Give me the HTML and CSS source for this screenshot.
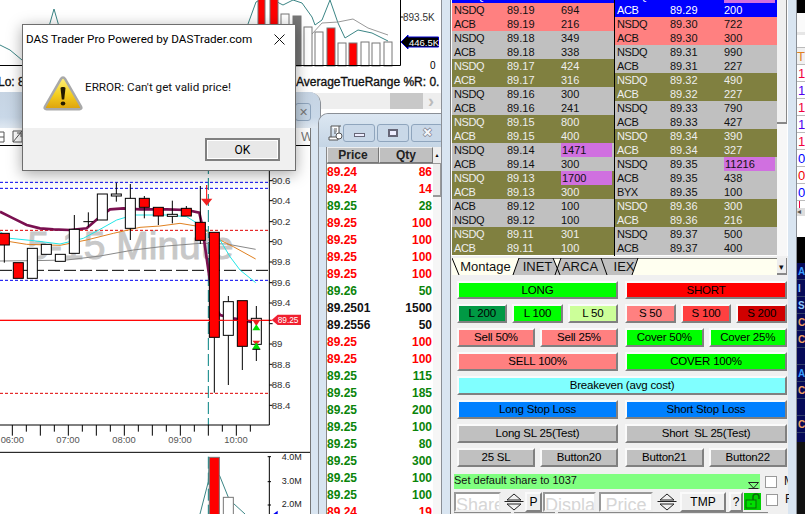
FILE: index.html
```html
<!DOCTYPE html>
<html lang="en">
<head>
<meta charset="utf-8">
<title>DAS Trader Pro</title>
<link rel="stylesheet" href="styles.css">
</head>
<body>
<div class="desktop">

  <section class="win back-win">
    <svg class="top-chart" width="441" height="72" viewBox="0 0 441 72">
      <polyline class="teal" points="0,45 10,50 22,60 48,30 54,9 60,30"/>
      <polyline class="teal" points="248,24 256,2 270,-5 279,3 283,5 293,0 302,3 312,17 315,25 322,20 330,0 338,23 345,38 358,30 372,33 388,41"/>
      <polyline class="grayline" points="312,34 322,23 338,22 353,19 368,28 388,35"/>
      <rect class="vr" x="258" y="-2" width="7" height="68"/>
      <rect class="vr" x="270" y="-2" width="8" height="68"/>
      <rect class="vw" x="281" y="14" width="8" height="52"/>
      <rect class="vg" x="293" y="16" width="8" height="50"/>
      <rect class="vw" x="304" y="27" width="8" height="39"/>
      <rect class="vw" x="315" y="32" width="8" height="34"/>
      <rect class="vr" x="327" y="28" width="8" height="38"/>
      <rect class="vw" x="338" y="43" width="8" height="23"/>
      <rect class="vr" x="349" y="43" width="8" height="23"/>
      <rect class="vw" x="361" y="42" width="8" height="24"/>
      <rect class="vw" x="372" y="43" width="8" height="23"/>
      <rect class="vw" x="384" y="42" width="8" height="24"/>
      <path class="axis" d="M0 65.5H400.5V0M400.5 17h3"/>
      <text class="vlabel" x="403" y="21">893.5K</text>
      <polygon class="vtag" points="401,42 408,35 408,37 438.500,37 438.500,47 408,47 408,49"/>
      <text class="vtagtext" x="409" y="45.500">446.5K</text>
      <text class="zero" x="430" y="69">0</text>
    </svg>
    <div class="status"><span class="lo">Lo: 8</span><span class="atr">AverageTrueRange %R: 0.</span></div>
    <div class="hscroll"><span class="hthumb"></span><span class="hchev">&#8250;</span></div>
  </section>

  <section class="win chart-win">
    <div class="chart-title"><span class="chart-close">&#10005;</span></div>
    <div class="chart-inner">
      <div class="chart-tools">
        <svg class="tool-icons" width="24" height="14" viewBox="0 0 24 14">
          <path class="tool" d="M-4 2h8v10h-8M0 7h4M13 1h9v11h-9zM13 12l9-11M17 3h4v4"/>
        </svg>
        <span class="chart-w">W</span>
      </div>
      <svg class="main-chart" width="310" height="368" viewBox="0 -72 930 1104">
        <text class="watermark" x="700" y="268">5-15 Minute</text>

        <path class="dash-blue" d="M0 37H808M0 55H808M0 331H808"/>
        <path class="dash-red" d="M0 181H808M0 670H808"/>
        <path class="dash-black" d="M0 301H808"/>
        <path class="solid-red" d="M0 451H815"/>
        <path class="dash-teal" d="M625 -72V765"/>

        <polyline class="ma-gray" points="0,273 100,272 200,270 300,258 400,240 500,228 600,220 680,222 767,238"/>
        <polyline class="ma-orange" points="30,215 80,223 180,226 260,210 340,190 420,172 480,168 540,160 600,170 650,205 700,230 767,267"/>
        <polyline class="ma-cyan" points="0,185 30,205 100,212 180,222 250,205 300,178 350,150 400,135 500,135 560,140 600,165 625,185 660,210 690,260 720,300 767,338"/>
        <polyline class="ma-maroon" points="0,125 40,145 80,165 120,175 160,178 210,180 260,175 300,140 330,118 370,115 420,118 500,118 560,120 598,128 605,160 625,300 640,400 660,435 700,445 750,455 770,460"/>

        <g class="wicks">
          <path d="M13 225V278M223 135V178M265 127V170M349 38V95M391 42V210M433 78V145M475 138V165M517 92V160M559 108V138M601 48V222M643 502V668M685 378V645M727 529V600M769 408V573M250 155H280"/>
        </g>
        <rect class="red" x="-2" y="190" width="30" height="35"/>
        <rect class="red" x="40" y="278" width="30" height="47"/>
        <rect class="white" x="82" y="235" width="30" height="90"/>
        <rect class="white" x="124" y="223" width="30" height="30"/>
        <rect class="white" x="166" y="253" width="30" height="21"/>
        <rect class="white" x="208" y="178" width="30" height="72"/>
        <rect class="white" x="292" y="72" width="30" height="78"/>
        <rect class="white" x="334" y="72" width="30" height="6"/>
        <rect class="white" x="376" y="85" width="30" height="90"/>
        <rect class="red" x="418" y="85" width="30" height="27"/>
        <rect class="red" x="460" y="112" width="30" height="26"/>
        <rect class="white" x="502" y="133" width="30" height="6"/>
        <rect class="red" x="544" y="115" width="30" height="23"/>
        <rect class="red" x="586" y="157" width="30" height="54"/>
        <rect class="red" x="628" y="187" width="30" height="315"/>
        <rect class="white" x="670" y="395" width="30" height="101"/>
        <rect class="red" x="712" y="392" width="30" height="137"/>
        <rect class="white" x="754" y="445" width="30" height="78"/>

        <path class="solid-red" d="M0 451H815"/>
        <path class="arrow-line" d="M620 45V90"/>
        <polygon class="arrow-red" points="603,86 637,86 620,107"/>
        <polygon class="arrow-red" points="757,449 781,449 769,468"/>
        <polygon class="arrow-green" points="757,481 781,481 769,463"/>
        <polygon class="arrow-red" points="757,512 781,512 769,525"/>
        <polygon class="arrow-green" points="757,537 781,537 769,517"/>
        <path class="wick-line" d="M757 538H781"/>

        <path class="axis3" d="M0 765H808V-72"/>
        <path class="axis3" d="M808 32h10M808 92h10M808 155h10M808 215h10M808 276h10M808 338h10M808 399h10M808 461h10M808 522h10M808 583h10M808 645h10M808 706h10"/>
        <path class="axis3" d="M37 765v32M79 765v20M121 765v32M163 765v20M205 765v32M247 765v20M289 765v32M331 765v20M373 765v32M415 765v20M457 765v32M499 765v20M541 765v32M583 765v20M625 765v32M667 765v20M709 765v32M751 765v20"/>

        <text class="ax" x="815" y="42">90.6</text>
        <text class="ax" x="815" y="102">90.4</text>
        <text class="ax" x="815" y="165">90.2</text>
        <text class="ax" x="815" y="225">90</text>
        <text class="ax" x="815" y="286">89.8</text>
        <text class="ax" x="815" y="348">89.6</text>
        <text class="ax" x="815" y="409">89.4</text>
        <text class="ax" x="815" y="532">89</text>
        <text class="ax" x="815" y="594">88.8</text>
        <text class="ax" x="815" y="654">88.6</text>
        <text class="ax" x="815" y="717">88.4</text>

        <polygon class="tag" points="815,450 833,434 903,434 903,465 833,465"/>
        <text class="tagtext" x="833" y="460">89.25</text>

        <text class="tm" x="2" y="820">06:00</text>
        <text class="tm" x="169" y="820">07:00</text>
        <text class="tm" x="337" y="820">08:00</text>
        <text class="tm" x="505" y="820">09:00</text>
        <text class="tm" x="673" y="820">10:00</text>

        <path class="axis3" d="M0 847H930"/>
        <path class="dash-teal" d="M625 860V1032"/>
        <polyline class="teal3" points="600,1032 625,935 628,862"/>
        <polyline class="teal3" points="658,915 685,982 700,1000 735,1032"/>
        <rect class="vol-red" x="628" y="862" width="30" height="172"/>
        <rect class="vol-white" x="670" y="982" width="30" height="52"/>
        <path class="axis3" d="M808 860V1032M803 860h10M803 935h10M803 1005h10"/>
        <polygon class="blue-tip" points="820,1032 833,1022 833,1032"/>
        <text class="vax" x="845" y="869">4.0M</text>
        <text class="vax" x="845" y="941">3.0M</text>
        <text class="vax" x="845" y="1010">2.0M</text>
      </svg>
    </div>
  </section>

  <section class="win price-win">
    <header class="price-title">
      <svg class="scroll-icon" width="15" height="17" viewBox="0 0 15 17">
        <path class="scroll-path" d="M3 1h8v9M3 1v11H1v3h9v-3H3M11 1h2M6 4h3M6 6h3M6 8h2"/>
        <circle class="scroll-path" cx="11" cy="11" r="3"/>
      </svg>
      <button class="cap-btn"><span class="cap-min"></span></button>
      <button class="cap-btn"><span class="cap-max"></span></button>
      <button class="cap-btn cap-x">&#10006;</button>
    </header>
    <div class="price-body">
      <div class="price-table">
        <div class="ph"><span class="ph-price">Price</span><span class="ph-qty">Qty</span></div>
        <div class="pr r"><span>89.24</span><span>86</span></div>
        <div class="pr r"><span>89.24</span><span>14</span></div>
        <div class="pr g"><span>89.25</span><span>28</span></div>
        <div class="pr r"><span>89.25</span><span>100</span></div>
        <div class="pr r"><span>89.25</span><span>100</span></div>
        <div class="pr r"><span>89.25</span><span>100</span></div>
        <div class="pr r"><span>89.25</span><span>100</span></div>
        <div class="pr g"><span>89.26</span><span>50</span></div>
        <div class="pr k"><span>89.2501</span><span>1500</span></div>
        <div class="pr k"><span>89.2556</span><span>50</span></div>
        <div class="pr r"><span>89.25</span><span>100</span></div>
        <div class="pr r"><span>89.25</span><span>100</span></div>
        <div class="pr g"><span>89.25</span><span>115</span></div>
        <div class="pr g"><span>89.25</span><span>185</span></div>
        <div class="pr g"><span>89.25</span><span>200</span></div>
        <div class="pr g"><span>89.25</span><span>100</span></div>
        <div class="pr g"><span>89.25</span><span>80</span></div>
        <div class="pr g"><span>89.25</span><span>300</span></div>
        <div class="pr g"><span>89.25</span><span>100</span></div>
        <div class="pr g"><span>89.25</span><span>100</span></div>
        <div class="pr r"><span>89.24</span><span>19</span></div>
      </div>
      <div class="price-scroll"><span class="ps-up">&#9650;</span><span class="ps-thumb"></span></div>
    </div>
  </section>

  <section class="win montage-win">
    <div class="montage">
      <div class="book">
        <div class="side-book">
          <div class="lv blue"><span>NSDQ</span><span>89.20</span><span>301</span></div>
          <div class="lv pink"><span>NSDQ</span><span>89.19</span><span>694</span></div>
          <div class="lv pink"><span>ACB</span><span>89.19</span><span>216</span></div>
          <div class="lv gray"><span>NSDQ</span><span>89.18</span><span>349</span></div>
          <div class="lv gray"><span>ACB</span><span>89.18</span><span>338</span></div>
          <div class="lv olive"><span>NSDQ</span><span>89.17</span><span>424</span></div>
          <div class="lv olive"><span>ACB</span><span>89.17</span><span>316</span></div>
          <div class="lv gray"><span>NSDQ</span><span>89.16</span><span>300</span></div>
          <div class="lv gray"><span>ACB</span><span>89.16</span><span>241</span></div>
          <div class="lv olive"><span>NSDQ</span><span>89.15</span><span>800</span></div>
          <div class="lv olive"><span>ACB</span><span>89.15</span><span>400</span></div>
          <div class="lv gray"><span>NSDQ</span><span>89.14</span><span class="big">1471</span></div>
          <div class="lv gray"><span>ACB</span><span>89.14</span><span>300</span></div>
          <div class="lv olive"><span>NSDQ</span><span>89.13</span><span class="big">1700</span></div>
          <div class="lv olive"><span>ACB</span><span>89.13</span><span>300</span></div>
          <div class="lv gray"><span>ACB</span><span>89.12</span><span>100</span></div>
          <div class="lv gray"><span>NSDQ</span><span>89.12</span><span>100</span></div>
          <div class="lv olive"><span>NSDQ</span><span>89.11</span><span>301</span></div>
          <div class="lv olive"><span>ACB</span><span>89.11</span><span>100</span></div>
        </div>
        <div class="side-book">
          <div class="lv blue"><span>NSDQ</span><span>89.29</span><span class="big">1122</span></div>
          <div class="lv blue"><span>ACB</span><span>89.29</span><span>200</span></div>
          <div class="lv pink"><span>NSDQ</span><span>89.30</span><span>722</span></div>
          <div class="lv pink"><span>ACB</span><span>89.30</span><span>300</span></div>
          <div class="lv gray"><span>NSDQ</span><span>89.31</span><span>990</span></div>
          <div class="lv gray"><span>ACB</span><span>89.31</span><span>227</span></div>
          <div class="lv olive"><span>NSDQ</span><span>89.32</span><span>490</span></div>
          <div class="lv olive"><span>ACB</span><span>89.32</span><span>227</span></div>
          <div class="lv gray"><span>NSDQ</span><span>89.33</span><span>790</span></div>
          <div class="lv gray"><span>ACB</span><span>89.33</span><span>427</span></div>
          <div class="lv olive"><span>NSDQ</span><span>89.34</span><span>390</span></div>
          <div class="lv olive"><span>ACB</span><span>89.34</span><span>327</span></div>
          <div class="lv gray"><span>NSDQ</span><span>89.35</span><span class="big">11216</span></div>
          <div class="lv gray"><span>ACB</span><span>89.35</span><span>438</span></div>
          <div class="lv gray"><span>BYX</span><span>89.35</span><span>100</span></div>
          <div class="lv olive"><span>NSDQ</span><span>89.36</span><span>300</span></div>
          <div class="lv olive"><span>ACB</span><span>89.36</span><span>216</span></div>
          <div class="lv gray"><span>NSDQ</span><span>89.37</span><span>500</span></div>
          <div class="lv gray"><span>ACB</span><span>89.37</span><span>400</span></div>
        </div>
        <div class="book-scroll"><span class="bs-thumb"></span></div>
      </div>

      <div class="tabs">
        <svg class="tab-shapes" width="325" height="18" viewBox="452 258 325 18">
          <polygon class="tab-off" points="513,275 519,258 553,258 560,275"/>
          <polygon class="tab-off" points="555,275 561,258 601,258 607,275"/>
          <polygon class="tab-off" points="601,258 607,275 632,275 638,258"/>
          <path class="tab-lines" d="M452 258L459 275M513 275L519 258H777M553 258L560 275M555 275L561 258M601 258L607 275M632 275L638 258"/>
        </svg>
        <span class="tab t1">Montage</span>
        <span class="tab t2">INET</span>
        <span class="tab t3">ARCA</span>
        <span class="tab t4">IEX</span>
        <span class="tab-drop">&#9662;</span>
      </div>

      <div class="buttons">
        <button class="b c-green">LONG</button>
        <button class="b c-red">SHORT</button>
        <div class="split">
          <button class="b c-dgreen">L 200</button>
          <button class="b c-green">L 100</button>
          <button class="b c-lime">L 50</button>
        </div>
        <div class="split">
          <button class="b c-pink">S 50</button>
          <button class="b c-lred">S 100</button>
          <button class="b c-dred">S 200</button>
        </div>
        <div class="split">
          <button class="b c-pink">Sell 50%</button>
          <button class="b c-pink">Sell 25%</button>
        </div>
        <div class="split">
          <button class="b c-green">Cover 50%</button>
          <button class="b c-green">Cover 25%</button>
        </div>
        <button class="b c-pink">SELL 100%</button>
        <button class="b c-green">COVER 100%</button>
        <button class="b c-cyan wide">Breakeven (avg cost)</button>
        <button class="b c-blue">Long Stop Loss</button>
        <button class="b c-blue">Short Stop Loss</button>
        <button class="b c-gray">Long SL 25(Test)</button>
        <button class="b c-gray">Short&nbsp; SL 25(Test)</button>
        <div class="split">
          <button class="b c-gray">25 SL</button>
          <button class="b c-gray">Button20</button>
        </div>
        <div class="split">
          <button class="b c-gray">Button21</button>
          <button class="b c-gray">Button22</button>
        </div>
      </div>

      <div class="msg-row">
        <div class="msg"><span>Set default share to 1037</span>
          <svg class="msg-drop" width="11" height="7" viewBox="0 0 11 7"><path class="hollow" d="M.5.5h10L5.500 6z"/><path class="hollow" d="M.5 6.500h10"/></svg>
        </div>
        <span class="check"></span><span class="check-label">M</span>
      </div>

      <div class="ctl-row">
        <span class="field f-share">Share</span>
        <svg class="spin" width="20" height="20" viewBox="0 0 20 20"><path class="hollow" d="M.5 9.500h19M10 2l7 6H3zM10 18l7-6H3z"/></svg>
        <button class="mini m-p">P</button>
        <span class="field f-disp">Display</span>
        <span class="field f-price">Price</span>
        <svg class="spin spin2" width="20" height="20" viewBox="0 0 20 20"><path class="hollow" d="M.5 9.500h19M10 2l7 6H3zM10 18l7-6H3z"/></svg>
        <button class="mini m-tmp">TMP</button>
        <button class="mini m-q">?</button>
        <span class="lock">
          <svg width="17" height="16" viewBox="0 0 17 16"><path class="lock-shackle" d="M9 7V4a3 3 0 0 1 6 0v2"/><rect class="lock-body" x="2" y="7" width="10" height="8"/><path class="lock-key" d="M7 10v2"/></svg>
        </span>
        <span class="check c2"></span><span class="check-label">F</span>
      </div>

      <div class="clip-row"><span class="clip c-a"></span><span class="clip c-b"></span><span class="clip c-c"></span></div>
    </div>
  </section>

  <aside class="edge">
    <div class="e-black"></div>
    <div class="e-head"></div>
    <div class="e-t">T</div>
    <div class="e-row e-red">1</div>
    <div class="e-row e-pur">1</div>
    <div class="e-row e-red">1</div>
    <div class="e-row e-pur">1</div>
    <div class="e-row e-red">1</div>
    <div class="e-row e-blu">0</div>
    <div class="e-row e-rd2">0</div>
    <div class="e-row e-blu">0</div>
    <div class="e-cut"></div>
    <div class="e-scroll">&#9666;</div>
    <div class="e-white"></div>
    <div class="e-dark"></div>
    <div class="e-navy">
      <span class="n-a">A</span>
      <span class="n-b">I</span>
      <span class="n-b">S</span>
      <span class="n-c">C</span>
      <span class="n-c">C</span>
      <span class="n-d"></span>
      <span class="n-a">A</span>
      <span class="n-c">C</span>
      <span class="n-d"></span>
      <span class="n-c">C</span>
    </div>
    <div class="e-end"></div>
  </aside>

  <section class="dialog" role="alertdialog">
    <header class="dlg-title">
      <span>DAS Trader Pro Powered by DASTrader.com</span>
      <svg class="dlg-x" width="11" height="11" viewBox="0 0 11 11"><path class="x-path" d="M.5.5l10 10M10.500.5l-10 10"/></svg>
    </header>
    <div class="dlg-body">
      <svg class="warn" width="40" height="36" viewBox="0 0 40 36">
        <defs>
          <linearGradient id="warnFill" x1="0" y1="0" x2="0" y2="1">
            <stop offset="0" stop-color="#fff27a"/>
            <stop offset=".55" stop-color="#f4cd1e"/>
            <stop offset="1" stop-color="#dca10c"/>
          </linearGradient>
        </defs>
        <path class="warn-tri" d="M20 2.500c1 0 1.600.6 2.200 1.600L38 31.500c.8 1.500.2 2.800-1.600 2.800H3.600c-1.800 0-2.400-1.300-1.600-2.800L17.800 4.100c.6-1 1.200-1.600 2.200-1.600z"/>
        <path class="warn-mark" d="M17.500 13c0-1.500 5-1.500 5 0L21.200 24.500h-2.400z"/>
        <ellipse class="warn-mark" cx="20" cy="28.500" rx="2.300" ry="2"/>
      </svg>
      <p class="dlg-msg">ERROR: Can't get valid price!</p>
    </div>
    <footer class="dlg-foot"><button class="ok">OK</button></footer>
  </section>
</div>
</body>
</html>
```

FILE: styles.css
```css
* { box-sizing: border-box; }
html, body { margin: 0; padding: 0; }
body { width: 805px; height: 514px; overflow: hidden; background: #fff; font-family: "Liberation Sans", Arial, sans-serif; }
button { font-family: inherit; margin: 0; padding: 0; color: #000; }
svg { display: block; }
svg text { font-family: "Liberation Sans", Arial, sans-serif; }

.desktop { position: relative; width: 805px; height: 514px; overflow: hidden; background: #fff; }
.win { position: absolute; }

/* back window */
.back-win { left: 0; top: 0; width: 441px; height: 110px; background: #fff; }
.top-chart { height: 72px; }
.status { height: 20px; display: flex; justify-content: space-between; align-items: center; font-size: 12px; -webkit-text-stroke: .35px #111; color: #111; white-space: nowrap; overflow: hidden; }
.lo { margin-left: -2px; }
.atr { margin-left: auto; width: 145px; overflow: hidden; }
.hscroll { height: 16px; margin-top: 1px; background: #eee; display: flex; align-items: center; padding-left: 390px; }
.hthumb { width: 33px; height: 16px; background: #c8c8c8; }
.hchev { margin-left: 5px; color: #bbb; font-size: 18px; line-height: 14px; font-weight: bold; }

.teal { fill: none; stroke: #3b8585; stroke-width: 1; }
.grayline { fill: none; stroke: #999; stroke-width: 1; }
.vr { fill: #f00; stroke: #777; }
.vw { fill: #fff; stroke: #777; }
.vg { fill: #777; stroke: #777; }
.axis { fill: none; stroke: #000; stroke-width: 1; }
.vlabel { font-size: 10px; fill: #333; }
.vtag { fill: #000; stroke: #0000d0; stroke-width: 1; }
.vtagtext { font-size: 9.500px; fill: #fff; }
.zero { font-size: 10px; fill: #000; }

/* chart window */
.chart-win { left: 0; top: 92px; width: 321px; height: 422px; background: #d9e5f1; border-right: 1px solid #8a8f96; border-top-right-radius: 12px; overflow: hidden; }
.chart-title { height: 36px; background: linear-gradient(#c6d4e3, #c9d8e8 70%, #dfe8f1); display: flex; justify-content: flex-end; align-items: flex-start; padding: 11px 9px 0 0; }
.chart-close { width: 16px; height: 18px; font-size: 11px; line-height: 16px; text-align: center; color: #777; background: #c5d5e5; border: 1px solid #8fa5bd; border-radius: 3px; }
.chart-inner { width: 311px; height: 386px; background: #fff; border-right: 1px solid #777; }
.chart-tools { height: 18px; display: flex; justify-content: space-between; align-items: center; border-bottom: 1px solid #000; background: #fff; }
.tool-icons { height: 14px; }
.tool { fill: none; stroke: #555; stroke-width: 1; }
.chart-w { font-size: 13px; color: #777; width: 9px; overflow: hidden; }
.watermark { font-size: 117px; fill: #c8c8c8; stroke: #c8c8c8; stroke-width: 3; text-anchor: end; }
.dash-blue { fill: none; stroke: #0000f0; stroke-width: 3; stroke-dasharray: 9 6; }
.dash-red { fill: none; stroke: #e00000; stroke-width: 3; stroke-dasharray: 9 6; }
.dash-black { fill: none; stroke: #000; stroke-width: 3; stroke-dasharray: 36 12; }
.dash-teal { fill: none; stroke: #008080; stroke-width: 3; stroke-dasharray: 36 12; }
.solid-red { fill: none; stroke: #f00; stroke-width: 3; }
.ma-gray { fill: none; stroke: #888; stroke-width: 3; }
.ma-orange { fill: none; stroke: #e08020; stroke-width: 3; }
.ma-cyan { fill: none; stroke: #22e6e6; stroke-width: 3; }
.ma-maroon { fill: none; stroke: #7a1050; stroke-width: 8; }
.wicks path { fill: none; stroke: #000; stroke-width: 3; }
.wick-line { fill: none; stroke: #000; stroke-width: 3; }
.red { fill: #f00; stroke: #000; stroke-width: 3; }
.white { fill: #fff; stroke: #000; stroke-width: 3; }
.arrow-line { fill: none; stroke: #f00; stroke-width: 3; }
.arrow-red { fill: #f02020; }
.arrow-green { fill: #00e000; }
.axis3 { fill: none; stroke: #000; stroke-width: 3; }
.ax { font-size: 29px; fill: #333; }
.tm { font-size: 28px; fill: #555; }
.vax { font-size: 27px; fill: #222; }
.tag { fill: #f02030; }
.tagtext { font-size: 25px; fill: #fff; }
.teal3 { fill: none; stroke: #3b8585; stroke-width: 3; }
.vol-red { fill: #f00; stroke: #777; stroke-width: 3; }
.vol-white { fill: #fff; stroke: #777; stroke-width: 3; }
.blue-tip { fill: #0000f0; }

/* price window */
.price-win { left: 318px; top: 113px; width: 124px; height: 401px; background: #d9e5f1; border: 1px solid #8a8f96; border-bottom: 0; border-top-left-radius: 10px; overflow: hidden; }
.price-title { height: 33px; display: flex; align-items: flex-start; padding: 10px 0 0 9px; background: linear-gradient(#dce7f2, #c5d5e5); white-space: nowrap; }
.scroll-icon { margin-top: 1px; flex: none; }
.scroll-path { fill: #fff; stroke: #555; stroke-width: 1; }
.cap-btn { flex: none; width: 32px; height: 18px; margin-right: 2px; background: #c9d8e8; border: 1px solid #8fa5bd; border-radius: 3px; display: flex; align-items: center; justify-content: center; }
.cap-min { width: 11px; height: 4px; background: #eef; border: 1px solid #667; margin-top: 3px; }
.cap-max { width: 10px; height: 8px; background: #eef; border: 2px solid #667; }
.cap-x { color: #f4f6f8; font-size: 13px; line-height: 14px; -webkit-text-stroke: .5px #667; }
.price-body { display: flex; margin-left: 7px; border-left: 1px solid #888; height: 368px; background: #fff; }
.price-table { width: 106px; flex: none; }
.ph { display: flex; height: 17px; background: #c0c0c0; border-bottom: 1px solid #888; font-size: 12px; font-weight: bold; color: #222; line-height: 15px; text-align: center; }
.ph span { display: block; border: 1px solid; border-color: #eee #777 #777 #eee; }
.ph-price { width: 52px; }
.ph-qty { width: 54px; }
.pr { height: 17px; display: flex; justify-content: space-between; font-size: 12px; font-weight: bold; line-height: 17px; padding-right: 1px; }
.r { color: #f00; }
.g { color: #0a840a; }
.k { color: #111; }
.price-scroll { width: 9px; background: #f6f6f6; display: flex; flex-direction: column; }
.ps-up { height: 17px; font-size: 5px; line-height: 16px; text-align: center; background: #eee; border-bottom: 1px solid #999; }
.ps-thumb { height: 33px; background: #eee; border-bottom: 2px solid #999; border-right: 1px solid #999; }

/* montage */
.montage-win { left: 441px; top: 0; width: 356px; height: 514px; background: #d9e5f1; border-left: 1px solid #8a8f96; border-right: 1px solid #8a8f96; padding: 0 8px 0 8px; }
.montage { position: relative; width: 338px; height: 514px; background: #f0f0f0; border-left: 1px solid #777; }
.book { display: flex; height: 256px; padding-left: 1px; overflow: hidden; background: #fff; }
.side-book { width: 162px; flex: none; margin-top: -11px; }
.side-book + .side-book { width: 163px; border-left: 1px solid #000; }
.lv { display: grid; grid-template-columns: 53px 54px 1fr; height: 14px; font-size: 11px; line-height: 14px; padding-left: 2px; }
.lv span { display: block; white-space: nowrap; }
.lv span:first-child { letter-spacing: -.4px; }
.blue { background: #0000ff; color: #fff; }
.pink { background: #ff8080; color: #111; }
.gray { background: #c0c0c0; color: #111; }
.olive { background: #808040; color: #eee; }
.big { background: #d070e0; color: #111; margin-right: 2px; padding-left: 1px; }
.book-scroll { width: 10px; flex: none; background: #f7f7f7; }
.bs-thumb { display: block; height: 124px; background: #f0f0f0; border-right: 1px solid #888; border-bottom: 2px solid #888; }

.tabs { position: relative; display: flex; margin-top: 2px; margin-left: 1px; width: 325px; height: 17px; background: #fffff0; font-size: 13px; line-height: 18px; color: #111; }
.tab-shapes { position: absolute; left: 0; top: 0; }
.tab-off { fill: #c0c0c0; }
.tab-lines { fill: none; stroke: #000; stroke-width: 1; }
.tab { position: relative; text-align: center; }
.t1 { width: 67px; }
.t2 { width: 37px; }
.t3 { width: 48px; }
.t4 { width: 40px; }
.tab-drop { position: absolute; right: -10px; top: 0; width: 10px; height: 17px; font-size: 9px; text-align: center; background: #eee; border-right: 1px solid #888; border-bottom: 2px solid #888; }

.buttons { display: grid; grid-template-columns: 161px 162px; grid-template-rows: 18px repeat(7, 19px); gap: 5px 7px; margin: 6px 0 0 6px; }
.split { display: flex; gap: 5px; }
.b { flex: 1 1 0; min-width: 0; border: 2px solid; border-color: #fafafa #808080 #808080 #fafafa; font-size: 11.500px; letter-spacing: -.2px; line-height: 13px; white-space: nowrap; overflow: hidden; }
.wide { grid-column: 1 / -1; }
.c-green { background: #00ff00; }
.c-red { background: #ff0000; }
.c-dgreen { background: #009944; }
.c-lime { background: #ccff99; }
.c-pink { background: #ff8080; }
.c-lred { background: #ff4040; }
.c-dred { background: #d00000; }
.c-cyan { background: #80ffff; }
.c-blue { background: #0080ff; }
.c-gray { background: #c0c0c0; }

.msg-row { display: flex; align-items: flex-start; margin: 7px 0 0 3px; height: 15px; }
.msg { position: relative; width: 306px; height: 15px; background: #80ff80; font-size: 11px; line-height: 13px; color: #111; display: flex; justify-content: space-between; }
.msg-drop { position: absolute; right: 1px; top: 8px; }
.hollow { fill: none; stroke: #222; stroke-width: 1; }
.check { flex: none; width: 12px; height: 12px; margin: 2px 0 0 5px; background: #fff; border: 1px solid #999; }
.check-label { flex: none; width: 4px; margin-left: 7px; overflow: hidden; font-size: 12px; color: #111; line-height: 15px; }

.ctl-row { display: flex; align-items: flex-start; margin: 3px 0 0 3px; height: 20px; }
.field { flex: none; height: 20px; overflow: hidden; background: #fff; border: 2px solid; border-color: #999 #eee #eee #999; color: #d6d6d6; font-size: 18px; line-height: 23px; white-space: nowrap; }
.f-share { width: 47px; }
.f-disp { width: 53px; margin-left: 1px; }
.f-price { width: 54px; margin-left: 3px; text-align: center; }
.spin { flex: none; margin-left: 3px; background: #f0f0f0; }
.spin2 { margin-left: 4px; }
.mini { flex: none; height: 20px; background: #eee; border: 2px solid; border-color: #fafafa #808080 #808080 #fafafa; font-size: 12px; line-height: 14px; }
.m-p { width: 17px; margin-left: 1px; }
.m-tmp { width: 46px; margin-left: 3px; }
.m-q { width: 14px; margin-left: 3px; }
.lock { flex: none; width: 17px; height: 17px; margin: 1px 0 0 1px; background: #00d000; }
.lock-shackle { fill: none; stroke: #0a6a0a; stroke-width: 1.500; }
.lock-body { fill: #00e000; stroke: #0a6a0a; stroke-width: 1; }
.lock-key { stroke: #0a6a0a; fill: none; }
.c2 { margin-left: 5px; }
.clip-row { display: flex; gap: 3px; margin: 0 0 0 3px; }
.clip { display: block; height: 2px; border-top: 1px solid #888; background: #e8e8e8; }
.c-a { width: 57px; }
.c-b { width: 41px; }
.c-c { width: 210px; }

/* right edge */
.edge { position: absolute; left: 797px; top: 0; width: 8px; height: 514px; overflow: hidden; background: #fff; font-size: 13px; font-family: "Liberation Sans", Arial, sans-serif; }
.e-black { height: 13px; background: #000; }
.e-head { height: 34px; background: linear-gradient(#fafafa 55%, #e6e6e6 55%, #e6e6e6 65%, #fff 65%); }
.e-t { height: 17px; line-height: 17px; background: #f0f0f0; color: #e08020; border-top: 1px solid #bbb; }
.e-row { height: 17px; line-height: 17px; border-top: 1px solid #bbb; padding-left: 1px; }
.e-red { color: #f00040; }
.e-pur { color: #5000f0; }
.e-blu { color: #0000ff; }
.e-rd2 { color: #f00000; }
.e-cut { height: 8px; border-top: 1px solid #bbb; background: linear-gradient(90deg, #fff 2px, #f00040 2px, #f00040 3px, #fff 3px); }
.e-scroll { height: 8px; font-size: 8px; line-height: 8px; background: #ddd; color: #555; }
.e-white { height: 21px; background: #fff; }
.e-dark { height: 26px; background: #000; }
.e-navy { height: 179px; background: #060a58; display: flex; flex-direction: column; font-size: 10px; font-weight: bold; line-height: 17px; }
.e-navy span { height: 17px; flex: none; border-bottom: 1px solid #33406a; padding-left: 1px; }
.n-a { color: #3b9dff; }
.n-b { color: #8fc8ff; }
.n-c { color: #f0a060; }
.e-end { height: 72px; background: #111; }

/* dialog */
.dialog { position: absolute; left: 22px; top: 24px; width: 274px; height: 147px; background: #fff; border: 1px solid #6e6e6e; box-shadow: 0 3px 14px rgba(0,0,0,.35); display: flex; flex-direction: column; font-family: Roboto, sans-serif; color: #111; }
.dlg-title { display: flex; justify-content: space-between; align-items: center; height: 26px; padding: 2px 10px 0 3px; font-size: 11.700px; white-space: nowrap; color: #000; }
.dlg-x { flex: none; }
.x-path { fill: none; stroke: #111; stroke-width: 1; }
.dlg-body { flex: 1; display: flex; align-items: flex-start; padding: 24px 0 0 20px; }
.warn { flex: none; }
.dlg-msg { margin: 5px 0 0 2px; font-size: 11.700px; white-space: nowrap; }
.warn-tri { fill: url(#warnFill); stroke: #a9a9a9; stroke-width: 2.500; }
.warn-mark { fill: #231a00; }
.dlg-foot { height: 42px; background: #f0f0f0; display: flex; justify-content: flex-end; align-items: flex-start; padding: 10px 15px 0 0; }
.ok { width: 75px; height: 23px; background: #e8e8e8; border: 2px solid #808080; box-shadow: inset 0 0 0 1px #fff; font-family: Roboto, sans-serif; font-size: 12px; }
```
